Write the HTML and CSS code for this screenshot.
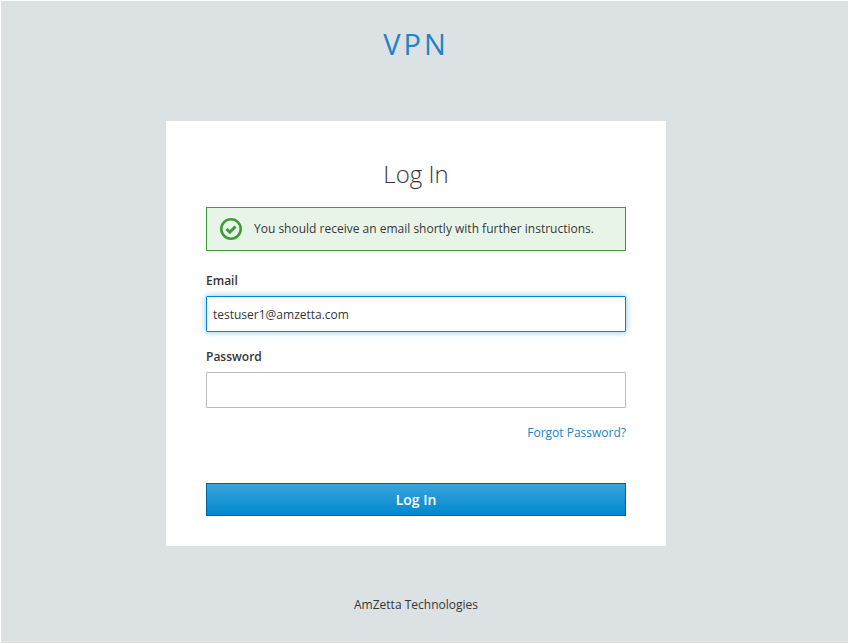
FILE: index.html
```html
<!DOCTYPE html>
<html lang="en">
<head>
<meta charset="utf-8">
<title>Log In</title>
<link rel="stylesheet" href="styles.css">
</head>
<body>
<header class="brand">VPN</header>
<main class="card">
  <h1 class="title">Log In</h1>
  <div class="alert">
    <svg class="alert-icon" viewBox="0 0 22 22" width="22" height="22"><circle cx="11" cy="11" r="9.7" fill="none" stroke="#3f9c35" stroke-width="2.6"/><path d="M6.5 11l3.3 3.2 5.7-5.7" fill="none" stroke="#3f9c35" stroke-width="3"/></svg>
    <span class="alert-text">You should receive an email shortly with further instructions.</span>
  </div>
  <form class="form">
    <label class="label" for="email">Email</label>
    <input class="input input-active" id="email" type="text" value="testuser1@amzetta.com">
    <label class="label" for="password">Password</label>
    <input class="input" id="password" type="password">
    <a class="forgot" href="#">Forgot Password?</a>
    <button class="submit" type="button">Log In</button>
  </form>
</main>
<footer class="footer"><span class="footer-text">AmZetta Technologies</span></footer>
</body>
</html>
```
FILE: styles.css
```css
* { box-sizing: border-box; }
body {
  margin: 0;
  height: 644px;
  padding-right: 17px;
  border: 1px solid #fff;
  background: #dce1e4;
  color: #363636;
  font: 12px/20px "Open Sans", sans-serif;
  overflow: hidden;
}
.brand {
  height: 120px;
  padding-top: 23px;
  text-align: center;
  font-size: 29px;
  line-height: 40px;
  letter-spacing: 3px;
  color: #2182c9;
}
.card {
  width: 500px;
  height: 425px;
  margin: 0 auto;
  padding: 40px 40px 0;
  background: #fff;
}
.title {
  margin: 0 0 20px;
  text-align: center;
  font-size: 24px;
  font-weight: 300;
  line-height: 26px;
}
.alert {
  display: flex;
  align-items: center;
  height: 44px;
  padding-left: 13px;
  border: 1px solid #3f9c35;
  background: #e9f4e9;
}
.alert-text { margin-left: 12px; }
.form { display: flex; flex-direction: column; }
.label { margin-top: 20px; font-weight: 600; height: 20px; }
.input {
  height: 36px;
  margin-top: 5px;
  padding: 0 6px;
  border: 1px solid #bbb;
  border-radius: 1px;
  background: #fff;
  color: #363636;
  font: 12px "Open Sans", sans-serif;
  outline: 0;
}
.input-active { border-color: #0088ce; box-shadow: 0 0 6px rgba(0,136,206,.5); }
.input-active + .label { margin-top: 15px; }
.forgot { align-self: flex-end; margin-top: 15px; color: #2182c9; text-decoration: none; }
.submit {
  height: 33px;
  margin-top: 40px;
  padding: 0;
  border: 1px solid #00659c;
  background: linear-gradient(#39a5dc, #0088ce);
  color: #fff;
  font: 600 14px "Open Sans", sans-serif;
}
.footer { margin-top: 49px; text-align: center; }
```
